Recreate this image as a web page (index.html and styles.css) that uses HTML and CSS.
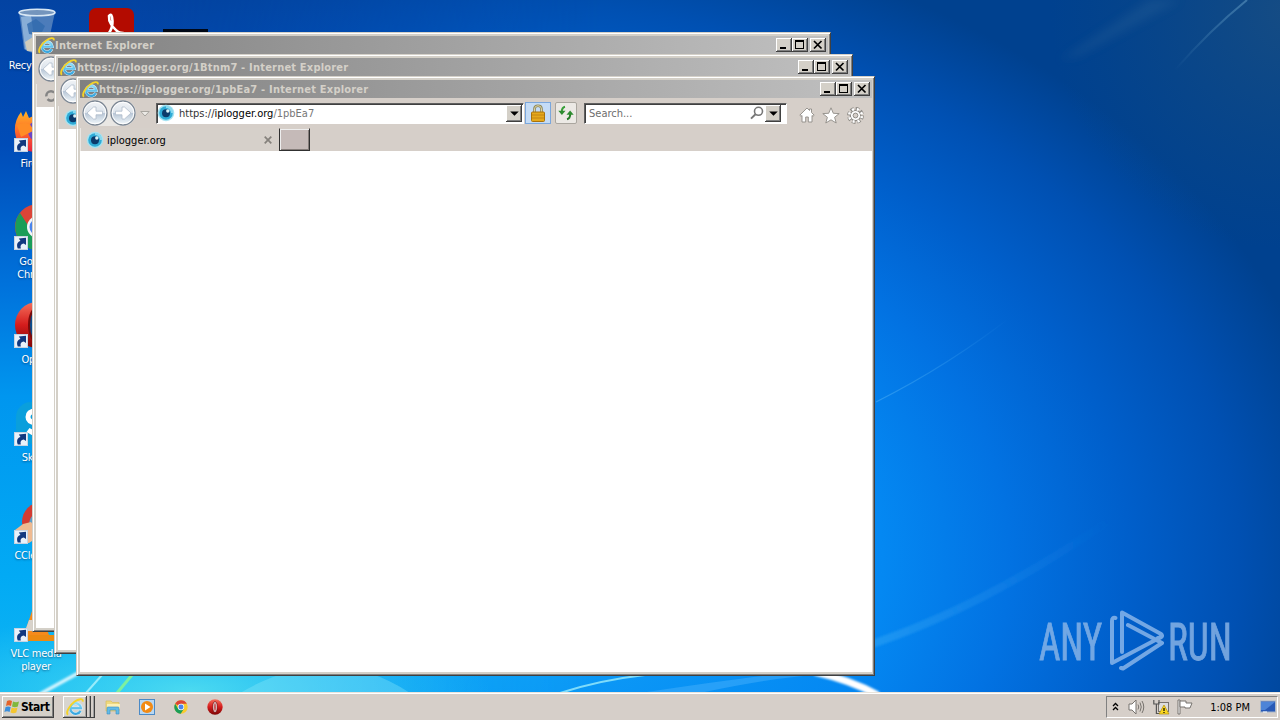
FILE: index.html
```html
<!DOCTYPE html>
<html lang="en">
<head>
<meta charset="utf-8">
<title>Desktop</title>
<link rel="stylesheet" href="styles.css">
</head>
<body>
<svg class="defs" width="0" height="0">
  <defs>
    <linearGradient id="orb" x1="0" y1="0" x2="0" y2="1"><stop offset="0" stop-color="#f2f5f8"/><stop offset=".48" stop-color="#dce3eb"/><stop offset=".52" stop-color="#b9c7d7"/><stop offset="1" stop-color="#f4fafd"/></linearGradient>
    <linearGradient id="ieblue" x1="0" y1="0" x2="0" y2="1"><stop offset="0" stop-color="#8adcf8"/><stop offset="1" stop-color="#35a4de"/></linearGradient>
    <linearGradient id="operared" x1="0" y1="0" x2="0" y2="1"><stop offset="0" stop-color="#f4705c"/><stop offset=".5" stop-color="#d51c1c"/><stop offset="1" stop-color="#7d0505"/></linearGradient>
    <linearGradient id="fire" x1="0" y1="0" x2="0" y2="1"><stop offset="0" stop-color="#ffb526"/><stop offset=".5" stop-color="#ff6a2a"/><stop offset="1" stop-color="#e8213f"/></linearGradient>
    <symbol id="ie" viewBox="0 0 16 16">
      <path d="M13 11.300A4.700 4.700 0 1 1 13.400 9H4.800" fill="none" stroke="#d9effa" stroke-width="2.900"/>
      <path d="M12.900 11.300A4.700 4.700 0 1 1 13.300 9H4.800" fill="none" stroke="url(#ieblue)" stroke-width="2"/>
      <path d="M1.800 14.900C-.6 13 3 6.600 7.500 3.400C11 .8 15.600 -.2 14.800 3.200" fill="none" stroke="#f5d327" stroke-width="1.700"/>
    </symbol>
    <symbol id="eye" viewBox="0 0 18 18">
      <circle cx="9" cy="9" r="8.300" fill="#a5e3f2"/>
      <circle cx="9" cy="9" r="6.800" fill="#2fabd6"/>
      <path d="M9 2.800A6.200 6.200 0 0 1 15.200 9" fill="none" stroke="#8ad8ee" stroke-width="2.200"/>
      <circle cx="9" cy="9.200" r="4" fill="#0c3a6b"/>
      <circle cx="10.800" cy="7" r="1.700" fill="#d9f3fa"/>
    </symbol>
    <symbol id="back" viewBox="0 0 26 26">
      <circle cx="13" cy="13" r="12" fill="url(#orb)" stroke="#7c8794" stroke-width="1.300"/>
      <circle cx="13" cy="13" r="10.800" fill="none" stroke="#fff" stroke-width="1"/>
      <path d="M5 13L11.500 7H14V11.200H20.500V14.800H14V19H11.500Z" fill="#fff" stroke="#b0bccb" stroke-width=".8"/>
    </symbol>
    <symbol id="chrome" viewBox="0 0 48 48">
      <circle cx="24" cy="24" r="23" fill="#f9cb2e"/>
      <path d="M24 24L4 12.500A23 23 0 0 1 44 12.500H24Z" fill="#dc4437"/>
      <path d="M24 24L34 30L23 47A23 23 0 0 1 4 12.500L14 30Z" fill="#1a9d58"/>
      <circle cx="24" cy="24" r="11" fill="#f4f7fb"/><circle cx="24" cy="24" r="8.500" fill="#4a84ec"/>
    </symbol>
    <symbol id="opera" viewBox="0 0 48 48">
      <circle cx="24" cy="24" r="23" fill="url(#operared)"/>
      <ellipse cx="24" cy="24" rx="6.500" ry="16" fill="#f3eeee" stroke="#650404" stroke-width="2"/>
      <ellipse cx="24" cy="24" rx="2" ry="12" fill="#b01212"/>
    </symbol>
    <symbol id="shortcut" viewBox="0 0 14 14">
      <rect x=".5" y=".5" width="13" height="13" fill="#e9f1fa" stroke="#c7d3e2"/>
      <path d="M3.800 12.500C2 8 4 5.600 6.500 5L4.800 2.400L12 1.800L12 9L9.800 7.400C7 7.800 6 9.500 6.800 12.500Z" fill="#12387f"/>
    </symbol>
    <symbol id="min" viewBox="0 0 16 14"><rect x="4" y="9" width="6" height="2"/></symbol>
    <symbol id="max" viewBox="0 0 16 14"><path d="M3 2H12V11H3ZM4 4V10H11V4Z" fill-rule="evenodd"/></symbol>
    <symbol id="close" viewBox="0 0 16 14"><path d="M4 3L11.500 10.500M11.500 3L4 10.500" stroke="#000" stroke-width="1.700"/></symbol>
  </defs>
</svg>

<div class="desktop">
  <svg class="wallpaper" width="1280" height="720" viewBox="0 0 1280 720">
    <defs>
      <radialGradient id="base" gradientUnits="userSpaceOnUse" cx="0" cy="0" r="1" gradientTransform="translate(500 560) scale(850 640)">
        <stop offset="0" stop-color="#12a6fa"/><stop offset=".45" stop-color="#0488f2"/><stop offset=".6" stop-color="#0272e2"/><stop offset=".74" stop-color="#005fcb"/><stop offset=".87" stop-color="#0050b2"/><stop offset="1" stop-color="#00418f"/>
      </radialGradient>
      <linearGradient id="left" x1="0" y1="0" x2="0" y2="1"><stop offset="0" stop-color="#0343a2"/><stop offset=".2" stop-color="#004cb8"/><stop offset=".4" stop-color="#0073dc"/><stop offset=".55" stop-color="#0096ef"/><stop offset=".8" stop-color="#02aaf4"/><stop offset="1" stop-color="#12b8f2"/></linearGradient>
      <linearGradient id="fade" x1="0" x2="1" y1="0" y2="0"><stop offset="0" stop-color="#fff"/><stop offset=".15" stop-color="#fff"/><stop offset=".75" stop-color="#000"/></linearGradient>
      <mask id="lm"><rect width="800" height="720" fill="url(#fade)"/></mask>
      <radialGradient id="cyan" gradientUnits="userSpaceOnUse" cx="0" cy="0" r="1" gradientTransform="translate(190 690) scale(300 80)"><stop offset="0" stop-color="#5ae4f0" stop-opacity=".8"/><stop offset="1" stop-color="#3fd5f5" stop-opacity="0"/></radialGradient>
      <radialGradient id="teal" gradientUnits="userSpaceOnUse" cx="1290" cy="10" r="240"><stop offset="0" stop-color="#1d5080" stop-opacity=".75"/><stop offset="1" stop-color="#104a80" stop-opacity="0"/></radialGradient>
      <linearGradient id="r1" gradientUnits="userSpaceOnUse" x1="876" y1="640" x2="1110" y2="520"><stop offset="0" stop-color="#33a5f4" stop-opacity=".5"/><stop offset="1" stop-color="#2a8ce8" stop-opacity="0"/></linearGradient>
      <linearGradient id="r2" gradientUnits="userSpaceOnUse" x1="1245" y1="0" x2="1175" y2="70"><stop offset="0" stop-color="#4c86b4" stop-opacity=".75"/><stop offset="1" stop-color="#4c86b4" stop-opacity="0"/></linearGradient>
      <linearGradient id="r3" gradientUnits="userSpaceOnUse" x1="876" y1="402" x2="1010" y2="320"><stop offset="0" stop-color="#45a9f2" stop-opacity=".6"/><stop offset="1" stop-color="#45a9f2" stop-opacity="0"/></linearGradient>
      <filter id="soft"><feGaussianBlur stdDeviation="1"/></filter>
      <filter id="softer"><feGaussianBlur stdDeviation="5"/></filter>
    </defs>
    <rect width="1280" height="720" fill="url(#base)"/>
    <rect width="800" height="720" fill="url(#left)" mask="url(#lm)"/>
    <rect width="1280" height="720" fill="url(#teal)"/>
    <rect y="610" width="500" height="110" fill="url(#cyan)"/>
    <path d="M1060 60L1150 0H1180L1080 55Z" fill="#2a6298" opacity=".35" filter="url(#softer)"/>
    <path d="M1175 70Q1210 30 1247 0" fill="none" stroke="url(#r2)" stroke-width="2"/>
    <path d="M876 402Q950 365 1020 310" fill="none" stroke="url(#r3)" stroke-width="1.200"/>
    <path d="M860 648Q980 610 1110 520" fill="none" stroke="url(#r1)" stroke-width="8" filter="url(#soft)"/>
    <path d="M40 694L82 671" stroke="#d6f6ff" stroke-width="3.500" filter="url(#soft)"/>
    <path d="M86 693L102 675" stroke="#98ecfb" stroke-width="2"/>
    <path d="M117 693L132 675" stroke="#7df0a0" stroke-width="3"/>
    <path d="M240 693Q330 640 410 693Z" fill="#8ce8fa" opacity=".35"/>
    <path d="M560 693Q600 680 645 675" fill="none" stroke="#7fdcfa" stroke-width="2"/>
    <path d="M700 693Q780 676 830 674H780Q740 678 640 693Z" fill="#45b0fb" opacity=".5"/>
    <path d="M815 672Q850 680 878 695" fill="none" stroke="#fff" stroke-width="7" filter="url(#soft)"/>
  </svg>

  <div class="icons">
    <div class="shortcut">
      <svg width="48" height="48" viewBox="0 0 48 48">
        <path d="M8 5L13 42Q24 50 36 42L44 5Z" fill="#668fc2" opacity=".75"/>
        <path d="M10 10L14 42Q20 46 25 45L20 8Z" fill="#bad7ee" opacity=".55"/>
        <path d="M16 17L25 12L34 19L29 29L18 27Z" fill="#316aae" opacity=".8"/>
        <path d="M14 35L22 30L34 40L29 45L16 44Z" fill="#d7ceb8" opacity=".9"/>
        <ellipse cx="26" cy="5.500" rx="18" ry="3.300" fill="#7495bd" stroke="#d8e7f4" stroke-width="1.600"/>
      </svg>
      <span class="name">Recycle Bin</span>
    </div>
    <div class="shortcut">
      <svg width="48" height="48" viewBox="0 0 48 48">
        <path d="M4 27Q3 16 10 7L12 12L15 6L18 13Q30 6 43 16Q50 48 24 47Q6 46 4 27Z" fill="url(#fire)"/>
        <circle cx="28" cy="26" r="11" fill="#6a47c8"/><path d="M6 20Q20 14 22 26L10 32Z" fill="#ff8c26"/>
        <use href="#shortcut" x="3" y="33" width="14" height="14"/>
      </svg>
      <span class="name">Firefox</span>
    </div>
    <div class="shortcut">
      <svg width="48" height="48" viewBox="0 0 48 48"><circle cx="27" cy="24" r="23" fill="#dc4437"/><path d="M9 10A23 23 0 0 0 27 47L22 30Z" fill="#1a9d58"/><circle cx="27" cy="24" r="11" fill="#f4f7fb"/><circle cx="27" cy="24" r="8.500" fill="#4a84ec"/><use href="#shortcut" x="3" y="33" width="14" height="14"/></svg>
      <span class="name">Google Chrome</span>
    </div>
    <div class="shortcut">
      <svg width="48" height="48" viewBox="0 0 48 48"><ellipse cx="26" cy="24" rx="22" ry="23" fill="url(#operared)"/><ellipse cx="27" cy="24" rx="9" ry="18" fill="#0b4d8e" stroke="#7a0a0a" stroke-width="2"/><use href="#shortcut" x="3" y="33" width="14" height="14"/></svg>
      <span class="name">Opera</span>
    </div>
    <div class="shortcut">
      <svg width="48" height="48" viewBox="0 0 48 48"><rect x="5" y="3" width="42" height="42" rx="15" fill="#0a9fdc"/><path d="M33 17Q30 12 25 12Q17 12 17 18Q17 23 25 24Q33 26 32 31Q25 37 17 31" fill="none" stroke="#fff" stroke-width="5"/><use href="#shortcut" x="3" y="33" width="14" height="14"/></svg>
      <span class="name">Skype</span>
    </div>
    <div class="shortcut">
      <svg width="48" height="48" viewBox="0 0 48 48"><circle cx="31" cy="25" r="20" fill="#d33b33"/><circle cx="33" cy="28" r="15" fill="#5e9fca"/><path d="M4 33L12 27L20 25L30 38L18 46H4Z" fill="#efba91"/><use href="#shortcut" x="3" y="33" width="14" height="14"/></svg>
      <span class="name">CCleaner</span>
    </div>
    <div class="shortcut">
      <svg width="48" height="48" viewBox="0 0 48 48"><path d="M4 40H46V46H4Z" fill="#ec8a12"/><path d="M13 40L25 4L38 40Z" fill="#f58a1c"/><path d="M14 36L18 25H32L36 36Z" fill="#d8d2ca"/><use href="#shortcut" x="3" y="33" width="14" height="14"/></svg>
      <span class="name">VLC media player</span>
    </div>
  </div>
  <div class="icons second">
    <svg width="48" height="48" viewBox="0 0 48 48"><rect x="2" y="1" width="45" height="46" rx="7" fill="#b30b00"/><path d="M13 34Q28 25 25 10Q24 6 22 9Q21 18 34 27Q39 29 36 26Q27 24 13 34" fill="none" stroke="#fff" stroke-width="2.600"/></svg>
    <svg width="48" height="48" viewBox="0 0 48 48"><path d="M2 22H47V26H2Z" fill="#000816"/></svg>
  </div>

  <div class="window first">
    <div class="titlebar"><svg class="ie" width="17" height="17"><use href="#ie"/></svg><span class="title">Internet Explorer</span>
      <span class="controls"><svg class="btn"><use href="#min"/></svg><svg class="btn"><use href="#max"/></svg><svg class="btn gap"><use href="#close"/></svg></span></div>
    <div class="navbar"><svg width="26" height="26"><use href="#back"/></svg></div>
    <div class="tabs"><div class="tab"><svg width="18" height="18" viewBox="0 0 18 18"><circle cx="9" cy="9" r="4.700" fill="none" stroke="#858585" stroke-width="2.500" stroke-dasharray="11 3"/></svg></div></div>
    <div class="page"></div>
  </div>

  <div class="window middle">
    <div class="titlebar"><svg class="ie" width="17" height="17"><use href="#ie"/></svg><span class="title">https://iplogger.org/1Btnm7 - Internet Explorer</span>
      <span class="controls"><svg class="btn"><use href="#min"/></svg><svg class="btn"><use href="#max"/></svg><svg class="btn gap"><use href="#close"/></svg></span></div>
    <div class="navbar"><svg width="26" height="26"><use href="#back"/></svg></div>
    <div class="tabs"><div class="tab"><svg width="18" height="18"><use href="#eye"/></svg></div></div>
    <div class="page"></div>
  </div>

  <div class="window front">
    <div class="titlebar"><svg class="ie" width="17" height="17"><use href="#ie"/></svg><span class="title">https://iplogger.org/1pbEa7 - Internet Explorer</span>
      <span class="controls"><svg class="btn"><use href="#min"/></svg><svg class="btn"><use href="#max"/></svg><svg class="btn gap"><use href="#close"/></svg></span></div>
    <div class="navbar">
      <div class="orbs">
        <svg width="26" height="26"><use href="#back"/></svg>
        <svg width="26" height="26" viewBox="0 0 26 26"><use href="#back" width="26" height="26" transform="matrix(-1 0 0 1 26 0)"/></svg>
      </div>
      <svg class="history" width="10" height="6" viewBox="0 0 10 6"><path d="M.8.5H9.200L5 5Z" fill="#eceae6" stroke="#a9a6a0"/></svg>
      <div class="field address">
        <svg width="18" height="18"><use href="#eye"/></svg>
        <span class="url"><i>https://</i>iplogger.org<i class="path">/1pbEa7</i></span>
        <svg class="drop" viewBox="0 0 16 18"><path d="M4 7H13L8.500 11.500Z"/></svg>
      </div>
      <div class="lock"><svg width="14" height="18" viewBox="0 0 14 18"><path d="M3.500 9V5Q3.500 1.700 7 1.700T10.500 5V9" fill="none" stroke="#8b8457" stroke-width="2.600"/><path d="M3.500 9V5Q3.500 1.700 7 1.700T10.500 5V9" fill="none" stroke="#dcd5a4" stroke-width="1"/><rect x=".5" y="8" width="13" height="9.500" rx="1" fill="#e5a91c" stroke="#a8720c"/><path d="M1 11H13M1 14H13" stroke="#c38412"/></svg></div>
      <div class="refresh"><svg width="16" height="16" viewBox="0 0 16 16"><path d="M7 1.800Q3.800 2.500 3.800 7" fill="none" stroke="#379e37" stroke-width="2"/><path d="M.3 5.800H7.500L3.900 10Z" fill="#2c8b2f"/><path d="M9 14.200Q12.200 13.500 12.200 9" fill="none" stroke="#247c27" stroke-width="2"/><path d="M8.500 9.800H15.700L12.100 5.400Z" fill="#2c8b2f"/></svg></div>
      <div class="field search"><span>Search...</span>
        <svg width="14" height="14" viewBox="0 0 14 14"><circle cx="8.500" cy="5.300" r="4" fill="none" stroke="#777" stroke-width="1.600"/><path d="M5.500 8.300L1 12.600" stroke="#777" stroke-width="2"/></svg>
        <svg class="drop" viewBox="0 0 16 18"><path d="M4 7H13L8.500 11.500Z"/></svg>
      </div>
      <div class="tools">
        <svg width="16" height="16" viewBox="0 0 16 16"><path d="M8 1L.8 8.200L2 9.300L3 8.500V15H6.700V10H9.300V15H13V8.500L14 9.300L15.200 8.200L12.500 5.500V2H10.500V3.500Z" fill="#fff" stroke="#8e8b86" stroke-width=".9"/></svg>
        <svg width="18" height="17" viewBox="0 0 18 17"><path d="M9 .8L11.300 6.300L17.200 6.600L12.600 10.300L14.200 16L9 12.800L3.800 16L5.400 10.300L.8 6.600L6.700 6.300Z" fill="#fff" stroke="#8e8b86" stroke-width=".9"/></svg>
        <svg width="17" height="17" viewBox="0 0 17 17"><circle cx="8.500" cy="8.500" r="6.600" fill="none" stroke="#8e8b86" stroke-width="3.600" stroke-dasharray="3.400 1.783"/><circle cx="8.500" cy="8.500" r="5.200" fill="#fff" stroke="#8e8b86" stroke-width="1.200"/><circle cx="8.500" cy="8.500" r="6.400" fill="none" stroke="#fff" stroke-width="2.500" stroke-dasharray="2.100 2.926" stroke-dashoffset="-.6"/><circle cx="8.500" cy="8.500" r="2.400" fill="#d6cfc9" stroke="#8e8b86"/></svg>
      </div>
    </div>
    <div class="tabs">
      <div class="tab"><svg width="18" height="18"><use href="#eye"/></svg><span>iplogger.org</span><svg class="x" width="8" height="8" viewBox="0 0 8 8"><path d="M.7.7L7.300 7.300M7.300.7L.7 7.300" stroke="#85817c" stroke-width="1.700"/></svg></div>
      <div class="newtab"></div>
    </div>
    <div class="page"></div>
  </div>

  <svg class="watermark" width="200" height="70" viewBox="1036 606 200 70">
    <g fill="#8fb8e8" stroke="#8fb8e8" stroke-width=".9" opacity=".8" font-family="Roboto, sans-serif" font-size="52">
      <text transform="translate(1039 659.500) scale(.62 1)" textLength="102" lengthAdjust="spacingAndGlyphs">ANY</text>
      <text transform="translate(1168 659.500) scale(.62 1)" textLength="103" lengthAdjust="spacingAndGlyphs">RUN</text>
    </g>
    <g fill="none" stroke="#80b0e8" stroke-width="4" stroke-linejoin="round" stroke-linecap="round" opacity=".9">
      <path d="M1115.500 618Q1112 617 1112 621V663L1161 637"/>
      <path d="M1122 652V612.500L1161 634Q1164 637 1158 638"/>
      <path d="M1128 625L1162 643L1123 668.500L1121 668"/>
    </g>
  </svg>

  <div class="taskbar">
    <div class="start"><svg width="16" height="16" viewBox="0 0 16 16"><path d="M3 2Q5.500 .5 8 2L7 7Q4.500 5.500 2 7Z" fill="#e66328"/><path d="M9 2.500Q12 4 15 2.500L13.800 7.500Q11 9 8 7.500Z" fill="#80b83d"/><path d="M1.600 8Q4 6.800 6.700 8L5.600 13Q3 11.500.4 13Z" fill="#3b8fdc"/><path d="M7.700 8.500Q10.500 10 13.500 8.500L12.300 13.500Q9.500 15 6.500 13.500Z" fill="#f4c630"/></svg><span>Start</span></div>
    <div class="group"><div class="task"><svg width="18" height="18"><use href="#ie"/></svg></div><i></i><i></i></div>
    <div class="pinned">
      <svg width="16" height="16" viewBox="0 0 16 16"><path d="M1 2H6L7.500 3.500H14V12H1Z" fill="#efd97f" stroke="#d8bd5b" stroke-width=".7"/><path d="M2 5H15V10H2Z" fill="#fbf0b6"/><path d="M2 15V9Q2 8 3 8H13Q14 8 14 9V15H11V11H5V15Z" fill="#63bbe6" stroke="#398fc4" stroke-width=".6"/></svg>
      <svg width="16" height="16" viewBox="0 0 16 16"><rect x=".5" y=".5" width="15" height="15" fill="#b8d7f2" stroke="#4b8ac6"/><circle cx="8" cy="8" r="6" fill="#f28a14"/><path d="M6 4.500L11.500 8L6 11.500Z" fill="#fff"/></svg>
      <svg width="14" height="14"><use href="#chrome"/></svg>
      <svg width="16" height="16"><use href="#opera"/></svg>
    </div>
    <div class="tray">
      <svg width="7" height="10" viewBox="0 0 7 10"><path d="M1 4L3.500 1.500L6 4M1 8L3.500 5.500L6 8" fill="none" stroke="#000" stroke-width="1.300"/></svg>
      <svg class="sound" width="17" height="16" viewBox="0 0 17 16"><path d="M1 5H4L8 1V15L4 11H1Z" fill="#fff" stroke="#77736e"/><path d="M10 5.500Q11.500 8 10 10.500M12 3.500Q14.500 8 12 12.500M14 2Q17.500 8 14 14" fill="none" stroke="#77736e"/></svg>
      <svg class="net" width="17" height="16" viewBox="0 0 17 16"><rect x="5.500" y="3.500" width="10" height="9" fill="#ddd" stroke="#77736e"/><path d="M.8 1V5H6V1M3.400 5V14.500H7" fill="none" stroke="#555" stroke-width="1.200"/><path d="M11 6L16 15H6Z" fill="#fbd820" stroke="#b28e0a" stroke-width=".7"/><path d="M11 9V12M11 13V14" stroke="#000" stroke-width="1.200"/></svg>
      <svg class="flag" width="17" height="16" viewBox="0 0 17 16"><path d="M1 1H3V15H1Z" fill="#fff" stroke="#77736e"/><path d="M3 2H9V4H15L13 9H8V8H3Z" fill="#fff" stroke="#77736e"/></svg>
      <span class="clock">1:08 PM</span>
      <svg class="show" width="16" height="14" viewBox="0 0 16 14"><rect x=".5" y="1" width="15" height="11" fill="#2859b6" stroke="#a9b7c9"/><path d="M1 2H15L5 10H1Z" fill="#4d84d7"/><path d="M3 12H7" stroke="#fff"/></svg>
    </div>
  </div>
</div>
</body>
</html>
```

FILE: styles.css
```css
* { box-sizing: border-box; }
body { margin: 0; overflow: hidden; font: 11px/13px "DejaVu Sans Condensed", "DejaVu Sans", sans-serif; font-stretch: condensed; color: #000; }
svg { display: block; flex: none; }
i { font-style: normal; }
.defs { position: absolute; }
.desktop { position: relative; width: 1280px; height: 720px; overflow: hidden; background: #0060cc; }
.wallpaper { position: absolute; left: 0; top: 0; }

.icons { position: absolute; left: 0; top: 0; width: 72px; display: flex; flex-direction: column; }
.icons.second { left: 87px; top: 7px; width: auto; flex-direction: row; gap: 26px; }
.shortcut { height: 98px; padding-top: 7px; display: flex; flex-direction: column; align-items: center; gap: 4px; }
.shortcut svg { margin-left: -2px; }
.name { width: 60px; color: #fff; text-align: center; letter-spacing: -.25px; text-shadow: 0 1px 2px rgba(0, 20, 60, .5); }

.window { position: absolute; width: 799px; height: 600px; padding: 3px 2px 3px 3px; display: flex; flex-direction: column; background: #d4d0c8; border: 1px solid; border-color: #d4d0c8 #404040 #404040 #d4d0c8; box-shadow: inset 1px 1px #fff, inset -1px -1px #808080; }
.first { left: 32px; top: 32px; }
.middle { left: 54px; top: 54px; }
.front { left: 76px; top: 76px; }
.titlebar { height: 18px; flex: none; display: flex; align-items: center; background: linear-gradient(90deg, #808080, #c0c0c0); padding: 0 2px 0 2px; }
.title { color: #d4d0c8; font-weight: bold; letter-spacing: .2px; white-space: nowrap; }
.controls { margin-left: auto; display: flex; }
.btn { width: 16px; height: 14px; background: #d4d0c8; box-shadow: inset -1px -1px #404040, inset 1px 1px #fff, inset -2px -2px #808080; }
.gap { margin-left: 2px; }
.navbar { height: 30px; flex: none; display: flex; align-items: center; padding: 0 8px 0 2px; background: #d6cfc9; }
.orbs { display: flex; gap: 2px; background: #e9e7e4; border-radius: 13px; }
.history { margin: 2px 0 0 4px; }
.field { height: 21px; display: flex; align-items: center; background: #fff; border: 1px solid; border-color: #606060 #fff #fff #606060; box-shadow: inset 1px 1px #404040; }
.address { width: 368px; margin-left: 6px; padding-right: 1px; }
.url { margin-left: 4px; white-space: nowrap; }
.url i { color: #333; }
.url i.path { color: #777; }
.drop { width: 16px; height: 17px; margin-left: auto; margin-top: 1px; background: #d4d0c8; box-shadow: inset -1px -1px #404040, inset 1px 1px #fff, inset -2px -2px #808080; }
.lock { width: 26px; height: 22px; margin-left: 1px; display: grid; place-items: center; background: #c5dcf6; border: 1px solid #7aa7dd; }
.refresh { width: 22px; height: 22px; margin-left: 4px; display: grid; place-items: center; background: #ece9e5; border: 1px solid #aaa69f; border-radius: 2px; }
.search { width: 203px; margin-left: 7px; padding-left: 4px; padding-right: 5px; color: #6d6d6d; }
.search > svg:first-of-type { margin-left: auto; }
.search .drop { margin-left: 1px; }
.tools { margin-left: auto; margin-top: 4px; display: flex; align-items: center; gap: 7px; }
.tabs { height: 23px; flex: none; display: flex; background: #d6cfc9; }
.tab { width: 199px; padding: 0 7px 0 5px; display: flex; align-items: center; background: #d6d0ca; border-left: 1px solid #ebe8e4; }
.tab span { margin: 1px 0 0 3px; }
.tab .x { margin-left: auto; }
.newtab { width: 31px; height: 23px; background: #c5bab8; border: 1px solid #303030; border-top-color: #d6cfc9; box-shadow: inset 1px 1px #eee, inset -1px -1px #857d7a; }
.page { flex: 1; background: #fff; }

.watermark { position: absolute; left: 1036px; top: 606px; }

.taskbar { position: absolute; left: 0; right: 0; bottom: 0; height: 28px; display: flex; align-items: center; background: #d6cfc9; border-top: 1px solid #e9e4dc; box-shadow: inset 0 1px #fff; padding: 1px 2px 0; }
.start { width: 52px; height: 22px; padding-left: 2px; display: flex; align-items: center; gap: 1px; background: #d4d0c8; box-shadow: inset -1px -1px #404040, inset 1px 1px #fff, inset -2px -2px #808080; font-size: 12px; font-weight: bold; letter-spacing: -.45px; }
.group { margin-left: 9px; height: 22px; display: flex; }
.task { width: 24px; display: grid; place-items: center; background: #d8d5cf; box-shadow: inset -1px -1px #404040, inset 1px 1px #fff, inset -2px -2px #a0a0a0; }
.group i { width: 4px; border-right: 1px solid #404040; border-bottom: 1px solid #404040; box-shadow: inset -1px 0 #a0a0a0; }
.pinned { margin-left: 10px; display: flex; align-items: center; gap: 18px; }
.pinned svg:nth-child(3) { margin: 0 1px; }
.tray { width: 172px; height: 22px; margin-left: auto; padding: 0 1px 0 5px; display: flex; align-items: center; border: 1px solid; border-color: #808080 #fff #fff #808080; }
.sound { margin-left: 9px; }
.net { margin-left: 8px; }
.flag { margin-left: 7px; }
.clock { margin-left: auto; white-space: nowrap; }
.show { margin-left: 10px; }
```
